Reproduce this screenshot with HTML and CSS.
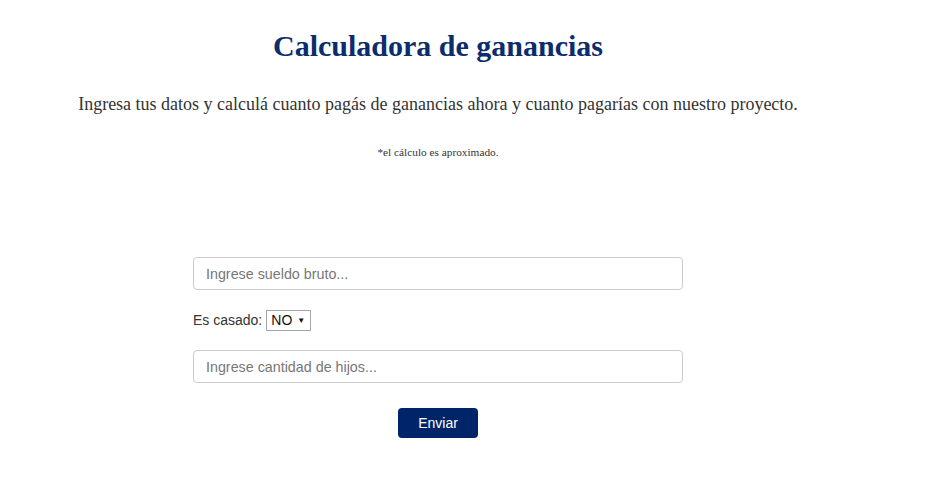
FILE: index.html
```html
<!DOCTYPE html>
<html lang="es">
<head>
<meta charset="utf-8">
<title>Calculadora de ganancias</title>
<link rel="stylesheet" href="styles.css">
</head>
<body>
<main class="page">
  <h1 class="title">Calculadora de ganancias</h1>
  <p class="lead">Ingresa tus datos y calculá cuanto pagás de ganancias ahora y cuanto pagarías con nuestro proyecto.</p>
  <p class="note">*el cálculo es aproximado.</p>
  <form class="form">
    <input class="field" type="text" placeholder="Ingrese sueldo bruto...">
    <label class="row">Es casado:
      <span class="select">NO <span class="caret">&#9660;</span></span>
    </label>
    <input class="field" type="text" placeholder="Ingrese cantidad de hijos...">
    <div class="actions"><button class="btn" type="button">Enviar</button></div>
  </form>
</main>
</body>
</html>
```
FILE: styles.css
```css
html, body { margin: 0; padding: 0; background: #fff; }
.page {
  width: 876px;
  font-family: "Liberation Serif", "Times New Roman", serif;
  color: #333;
  padding-top: 28px;
}
.title {
  margin: 0;
  text-align: center;
  font-size: 30px;
  line-height: 36px;
  font-weight: bold;
  color: #0c2d6b;
}
.lead {
  margin: 29px 0 0;
  text-align: center;
  font-size: 18px;
  line-height: 22px;
  color: #333;
}
.note {
  margin: 30px 0 0;
  text-align: center;
  font-size: 11.3px;
  line-height: 14px;
  color: #333;
}
.form {
  width: 490px;
  margin: 98px auto 0;
  display: flex;
  flex-direction: column;
  font-family: "Liberation Sans", Arial, sans-serif;
  font-size: 14px;
}
.field {
  box-sizing: border-box;
  height: 33px;
  width: 490px;
  border: 1px solid #ccc;
  border-radius: 4px;
  padding: 0 12px;
  font-family: "Liberation Sans", Arial, sans-serif;
  font-size: 14.3px;
  color: #555;
}
.field::placeholder { color: #777; }
.row {
  display: flex;
  align-items: center;
  gap: 4px;
  margin: 20px 0;
  color: #333;
  height: 20px;
}
.select {
  box-sizing: border-box;
  height: 21px;
  border: 1px solid #a6a6a6;
  display: inline-flex;
  align-items: center;
  padding: 0 5px 0 4px;
  font-size: 14px;
  color: #111;
  gap: 5px;
}
.caret { font-size: 8px; }
.actions {
  display: flex;
  justify-content: center;
  margin-top: 25px;
}
.btn {
  width: 80px;
  height: 30px;
  border: 0;
  border-radius: 4px;
  background: #002468;
  color: #fff;
  font-family: "Liberation Sans", Arial, sans-serif;
  font-size: 14px;
}
```
